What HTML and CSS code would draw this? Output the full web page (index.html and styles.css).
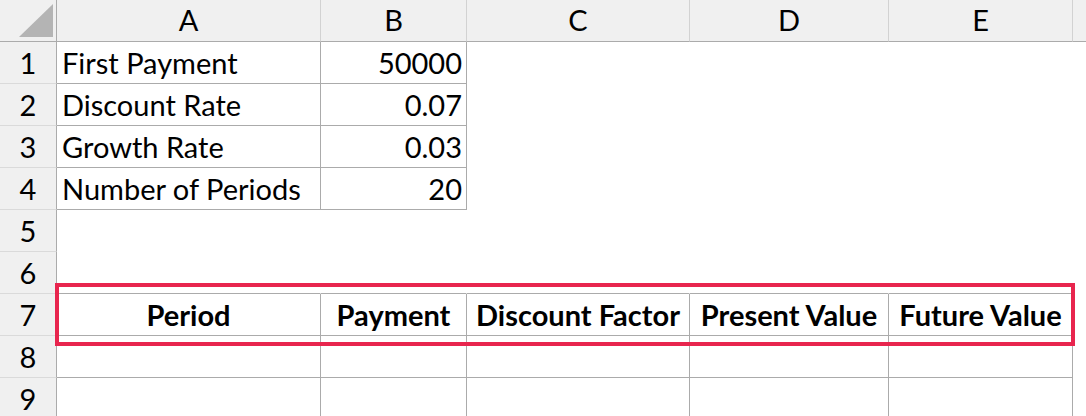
FILE: index.html
```html
<!DOCTYPE html>
<html lang="en">
<head>
    <meta charset="UTF-8">
    <title>Growing Annuity</title>
    <link rel="stylesheet" href="styles.css">
</head>
<body>
<div class="sheet">
    <!-- column headers -->
    <div class="corner"><svg width="56" height="41"><polygon points="19,37 53,37 53,4" fill="#b4b4b4"/></svg></div>
    <div class="ch">A</div>
    <div class="ch">B</div>
    <div class="ch">C</div>
    <div class="ch">D</div>
    <div class="ch">E</div>
    <div class="ch last"></div>

    <div class="rh">1</div>
    <div class="cell br bb">First Payment</div>
    <div class="cell br bb num">50000</div>
    <div class="cell"></div><div class="cell"></div><div class="cell"></div><div class="cell"></div>

    <div class="rh">2</div>
    <div class="cell br bb">Discount Rate</div>
    <div class="cell br bb num">0.07</div>
    <div class="cell"></div><div class="cell"></div><div class="cell"></div><div class="cell"></div>

    <div class="rh">3</div>
    <div class="cell br bb">Growth Rate</div>
    <div class="cell br bb num">0.03</div>
    <div class="cell"></div><div class="cell"></div><div class="cell"></div><div class="cell"></div>

    <div class="rh">4</div>
    <div class="cell br bb">Number of Periods</div>
    <div class="cell br bb num">20</div>
    <div class="cell"></div><div class="cell"></div><div class="cell"></div><div class="cell"></div>

    <div class="rh">5</div>
    <div class="cell"></div><div class="cell"></div><div class="cell"></div><div class="cell"></div><div class="cell"></div><div class="cell"></div>

    <div class="rh">6</div>
    <div class="cell bb"></div><div class="cell bb"></div><div class="cell bb"></div><div class="cell bb"></div><div class="cell bb"></div><div class="cell"></div>

    <div class="rh">7</div>
    <div class="cell br bb head">Period</div>
    <div class="cell br bb head">Payment</div>
    <div class="cell br bb head">Discount Factor</div>
    <div class="cell br bb head">Present Value</div>
    <div class="cell br bb head">Future Value</div>
    <div class="cell"></div>

    <div class="rh">8</div>
    <div class="cell br bb"></div><div class="cell br bb"></div><div class="cell br bb"></div><div class="cell br bb"></div><div class="cell br bb"></div><div class="cell"></div>

    <div class="rh">9</div>
    <div class="cell br bb"></div><div class="cell br bb"></div><div class="cell br bb"></div><div class="cell br bb"></div><div class="cell br bb"></div><div class="cell"></div>

    <div class="highlight"></div>
</div>
</body>
</html>
```

FILE: styles.css
```css
body {
    margin: 0;
    padding: 0;
    background-color: #fff;
    overflow: hidden;
    font-family: Lato, "Open Sans", sans-serif;
    font-size: 29px;
    color: #000;
}
.sheet {
    position: relative;
    display: grid;
    grid-template-columns: 57px 264px 146px 223px 199px 184px 1fr;
    grid-template-rows: 42px repeat(9, 42px);
}
.sheet > div {
    box-sizing: border-box;
    display: flex;
    align-items: flex-end;
    line-height: 1.2;
    padding-bottom: 2px;
    white-space: nowrap;
    overflow: hidden;
}
.corner {
    background-color: #f0f0f0;
    border-right: 1px solid #ababab;
    border-bottom: 1px solid #ababab;
    padding-bottom: 0 !important;
}
.corner svg {
    display: block;
}
.ch {
    background-color: #f0f0f0;
    justify-content: center;
    border-right: 1px solid #d2d2d2;
    border-bottom: 1px solid #ababab;
    padding-bottom: 3px !important;
}
.ch.last {
    border-right: none;
}
.rh {
    background-color: #f0f0f0;
    justify-content: center;
    border-right: 1px solid #ababab;
    border-bottom: 1px solid #dadada;
    padding-bottom: 2px !important;
}
.cell {
    padding-left: 5px;
    padding-right: 4px;
    border-right: 1px solid transparent;
    border-bottom: 1px solid transparent;
}
.cell.br {
    border-right-color: #ababab;
}
.cell.bb {
    border-bottom-color: #ababab;
}
.cell.num {
    justify-content: flex-end;
}
.cell.head {
    justify-content: center;
    font-weight: bold;
    padding-left: 0;
    padding-right: 0;
}
.highlight {
    position: absolute;
    left: 55px;
    top: 283px;
    width: 1020px;
    height: 63px;
    box-sizing: border-box;
    border: 4px solid #e8254e;
    padding: 0 !important;
}
```
